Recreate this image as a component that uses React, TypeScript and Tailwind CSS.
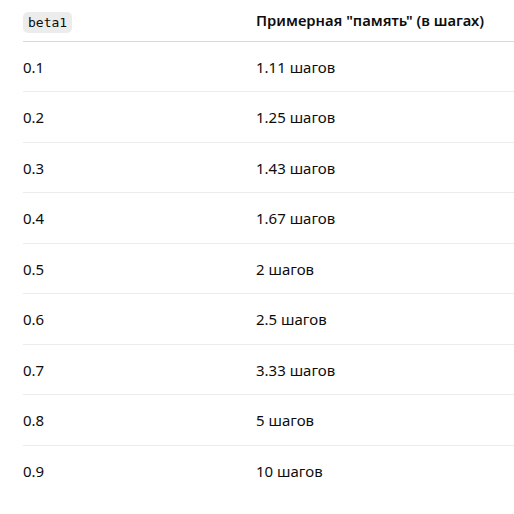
const rows: [string, string][] = [
  ["0.1", "1.11 шагов"],
  ["0.2", "1.25 шагов"],
  ["0.3", "1.43 шагов"],
  ["0.4", "1.67 шагов"],
  ["0.5", "2 шагов"],
  ["0.6", "2.5 шагов"],
  ["0.7", "3.33 шагов"],
  ["0.8", "5 шагов"],
  ["0.9", "10 шагов"],
];

export default function App() {
  return (
    <div className="w-[514px] h-[514px] overflow-hidden bg-white pl-[23px] font-['Noto_Sans','Liberation_Sans',sans-serif] text-[15px] text-[#0d0d0d]">
      <table className="w-[491px] border-collapse text-left">
        <thead>
          <tr className="h-[41px] border-b border-[#d9d9d9]">
            <th className="w-[233px] p-0 pt-[3px] align-middle font-normal">
              <code className="inline-block rounded-[5px] bg-[#ececec] px-[5px] py-[2px] font-['DejaVu_Sans_Mono','Liberation_Mono',monospace] text-[13px] leading-[17px] text-[#0d0d0d]">
                beta1
              </code>
            </th>
            <th className="p-0 align-middle text-[14.75px] font-semibold">Примерная "память" (в шагах)</th>
          </tr>
        </thead>
        <tbody>
          {rows.map(([b, m], i) => (
            <tr
              key={b}
              className={`h-[50.5px] ${i < rows.length - 1 ? "border-b border-[#ececec]" : ""}`}
            >
              <td className="p-0 pt-[1px] align-middle">{b}</td>
              <td className="p-0 pt-[1px] align-middle">{m}</td>
            </tr>
          ))}
        </tbody>
      </table>
    </div>
  );
}
